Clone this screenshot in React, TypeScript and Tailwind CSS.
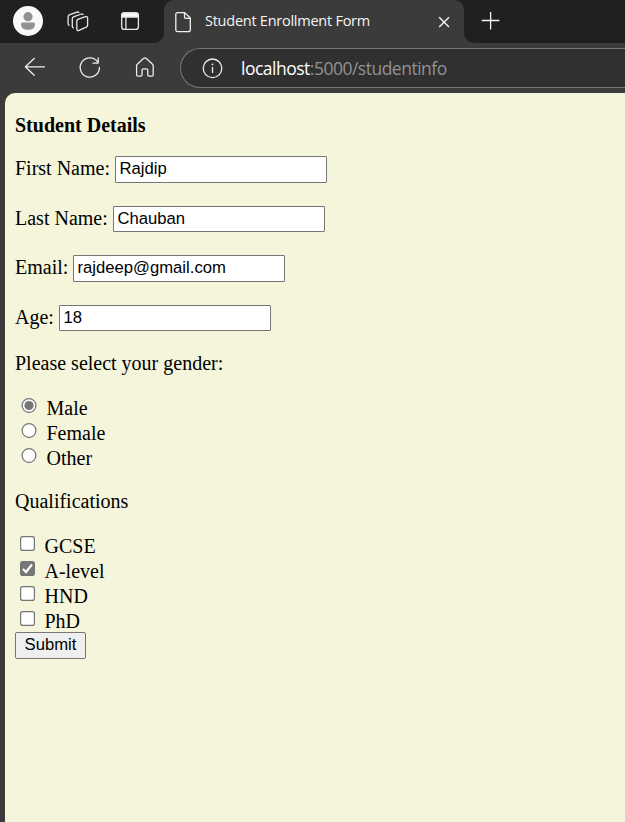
import React from 'react';

const fields = [
  { label: 'First Name:', value: 'Rajdip', row: 'h-[50px]', labelWidth: 'w-[100px]', box: 'h-[27px] pb-[2px]' },
  { label: 'Last Name:', value: 'Chauban', row: 'h-[49px]', labelWidth: 'w-[98px]', box: 'h-[26px] pb-0' },
  { label: 'Email:', value: 'rajdeep@gmail.com', row: 'h-[50px]', labelWidth: 'w-[58px]', box: 'h-[27px] pb-[2px]' },
  { label: 'Age:', value: '18', row: 'h-[46px]', labelWidth: 'w-[44px]', box: 'h-[26px] pb-0' },
];

const genders = ['Male', 'Female', 'Other'];
const qualifications = ['GCSE', 'A-level', 'HND', 'PhD'];

function Radio({ checked }: { checked: boolean }) {
  return (
    <svg className="ml-[6px] mt-[2px] size-4 shrink-0" viewBox="0 0 16 16">
      <circle cx="8" cy="8.5" r="6.9" fill="#fff" stroke="#767676" strokeWidth="1.25" />
      {checked && <circle cx="8" cy="8.5" r="4.6" fill="#767676" />}
    </svg>
  );
}

function Checkbox({ checked }: { checked: boolean }) {
  return (
    <svg className="ml-[5px] mt-[3px] size-[15px] shrink-0" viewBox="0 0 15 15">
      <rect x="0.6" y="0.6" width="13.8" height="13.8" rx="2.2" fill={checked ? '#767676' : '#fff'} stroke="#767676" strokeWidth="1.2" />
      {checked && <path d="M3 8l3 3 6-7.5" fill="none" stroke="#fff" strokeWidth="2.2" />}
    </svg>
  );
}

function TabStrip() {
  return (
    <div className="flex h-[43px] bg-[#3b3b3b]">
      <div className="flex w-[164px] shrink-0 rounded-br-[10px] bg-[#202020]">
        <svg className="h-[43px] w-[164px]" viewBox="0 0 164 43" fill="none" stroke="#e8e8e8" strokeWidth="1.3" strokeLinejoin="round">
          <circle cx="28" cy="21" r="15" fill="#f8f8f8" stroke="none" />
          <circle cx="28" cy="16.7" r="4.6" fill="#929292" stroke="none" />
          <path d="M22.7 22.5h10.6c1 0 1.7.7 1.7 1.7 0 3.8-2.7 5.6-7 5.6s-7-1.8-7-5.6c0-1 .7-1.7 1.7-1.7z" fill="#929292" stroke="none" />
          <path d="M77.8 19.4l7.8-2.7c1.2-.4 2 .2 2 1.3v7.2c0 1-.4 1.6-1.3 2l-7.3 3.2c-1.3.5-2.2 0-2.2-1.3v-8c0-.9.3-1.4 1-1.7z" />
          <path d="M74 27.8c-1 .3-1.7-.3-1.7-1.5v-7.8c0-.8.4-1.4 1.2-1.7l7.8-2.8c1-.3 1.7 0 2 1M69.6 25.4c-1-.1-1.5-.7-1.5-1.7v-7c0-.9.4-1.5 1.2-1.8l7.6-2.8c1-.3 1.7 0 2.1.8" />
          <rect x="121.7" y="12.9" width="16.7" height="16.5" rx="2.7" />
          <path d="M121.7 17v-1.5c0-1.7 1-2.7 2.7-2.7h11.3c1.7 0 2.7 1 2.7 2.7V17z" fill="#f8f8f8" />
          <path d="M125.9 17v12.4" />
        </svg>
      </div>
      <div className="w-[300px] shrink-0 bg-[#202020]">
        <div className="flex h-[43px] items-center rounded-t-[10px] bg-[#3b3b3b] pl-[11px]">
          <svg className="h-[22px] w-4 shrink-0" viewBox="0 0 16 22" fill="none" stroke="#f0f0f0" strokeWidth="1.3" strokeLinejoin="round">
            <path d="M2.7 1.6h7L15.3 7v11.7c0 1.2-.7 1.9-1.9 1.9H2.7c-1.2 0-1.9-.7-1.9-1.9V3.5c0-1.2.7-1.9 1.9-1.9zM9.5 1.8v4.3c0 .8.4 1.2 1.2 1.2h4.3" />
          </svg>
          <span className="ml-[14px] -mt-[2px] w-[228px] whitespace-nowrap font-['Open_Sans','Noto_Sans',sans-serif] text-[14.5px] leading-5 tracking-[-0.25px] text-[#f5f5f5]">Student Enrollment Form</span>
          <svg className="ml-[5px] size-3" viewBox="0 0 12 12" stroke="#f5f5f5" strokeWidth="1.4">
            <path d="M1.2 1.2l9.8 9.8M11 1.2L1.2 11" />
          </svg>
        </div>
      </div>
      <div className="flex-1 rounded-bl-[10px] bg-[#202020]">
        <svg className="ml-[17px] mt-[12px] size-[19px]" viewBox="0 0 19 19" stroke="#f5f5f5" strokeWidth="1.3">
          <path d="M.8 8.5h17.6M9.6 0v17.6" />
        </svg>
      </div>
    </div>
  );
}

function AddressBar() {
  return (
    <div className="flex h-[50px] bg-[#3b3b3b]">
      <svg className="h-[50px] w-[180px] shrink-0" viewBox="0 43 180 50" fill="none" stroke="#eee" strokeWidth="1.3" strokeLinecap="round" strokeLinejoin="round">
        <path d="M44.5 66.8H25.4M34.2 58.5l-8.8 8.3 8.8 8.5" />
        <path d="M97.8 62.2A9.6 9.6 0 1 0 99.4 67.4M98.2 57.9v5.2h-5.2" />
        <path d="M136.6 65.8c0-.8.3-1.4.9-1.9l6-5.3c.9-.8 2-.8 2.8 0l6 5.3c.6.5.9 1.1.9 1.9v9c0 .8-.5 1.3-1.3 1.3h-2.8c-.8 0-1.3-.5-1.3-1.3v-4.5c0-.9-.5-1.4-1.4-1.4h-3c-.9 0-1.4.5-1.4 1.4v4.5c0 .8-.5 1.3-1.3 1.3h-2.8c-.8 0-1.3-.5-1.3-1.3z" />
      </svg>
      <div className="mt-[5px] flex h-10 flex-1 items-center rounded-l-full border border-r-0 border-[#777] bg-[#303030] pl-[21px]">
        <svg className="size-[21px] shrink-0" viewBox="0 0 21 21" fill="none" stroke="#eee" strokeWidth="1.3">
          <circle cx="10.5" cy="10.3" r="9.3" />
          <path d="M10.5 9v6" />
          <circle cx="10.5" cy="6.4" r=".9" fill="#eee" stroke="none" />
        </svg>
        <span className="ml-[18px] -mt-px whitespace-nowrap font-['Open_Sans','Noto_Sans',sans-serif] text-[17.5px] leading-6 tracking-[-0.5px] text-[#929292]">
          <span className="text-white">localhost</span>:5000/studentinfo
        </span>
      </div>
    </div>
  );
}

export default function App() {
  return (
    <div className="h-[822px] w-[625px] overflow-hidden bg-[#3b3b3b]">
      <TabStrip />
      <AddressBar />
      <form className="ml-[5px] h-[729px] rounded-tl-[10px] bg-[#f5f5dc] pl-[10px] pt-[19px] font-['Liberation_Serif',serif] text-[20px] leading-[27px] text-black">
        <h1 className="h-[43px] text-[20px] font-bold leading-[27px]">Student Details</h1>
        {fields.map((f) => (
          <div key={f.label} className={`flex items-start ${f.row}`}>
            <label className={`shrink-0 whitespace-nowrap ${f.labelWidth}`}>{f.label}</label>
            <input
              className={`mt-px w-[212px] rounded-[1px] border border-[#767676] bg-white px-[3.5px] font-['Liberation_Sans',sans-serif] text-[16.67px] leading-5 outline-none ${f.box}`}
              defaultValue={f.value}
            />
          </div>
        ))}
        <p className="h-[45px]">Please select your gender:</p>
        <div className="h-[93px]">
          {genders.map((g, i) => (
            <label key={g} className="flex h-[25px]">
              <Radio checked={i === 0} />
              <span className="ml-[9.5px]">{g}</span>
            </label>
          ))}
        </div>
        <p className="h-[45px]">Qualifications</p>
        <div className="h-[99px]">
          {qualifications.map((q, i) => (
            <label key={q} className="flex h-[25px]">
              <Checkbox checked={i === 1} />
              <span className="ml-[9.5px]">{q}</span>
            </label>
          ))}
        </div>
        <button type="button" className="block h-[27px] w-[71px] rounded-[2px] border border-[#767676] bg-[#efefef] pb-px font-['Liberation_Sans',sans-serif] text-[16.67px] leading-6">
          Submit
        </button>
      </form>
    </div>
  );
}
